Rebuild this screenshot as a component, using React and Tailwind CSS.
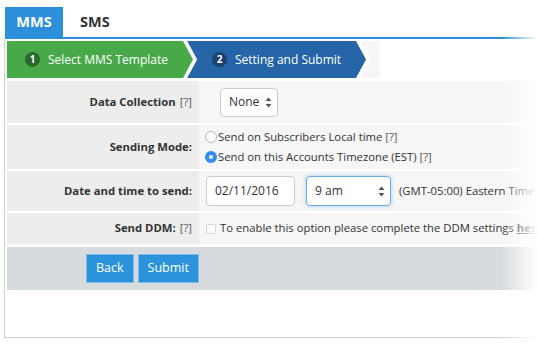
import React from 'react'

export default function App() {
  return (
    <div className="relative w-[537px] h-[344px] overflow-hidden bg-white font-['Open_Sans',sans-serif] text-[#333]">
      {/* tabs */}
      <div className="pt-[7px] pl-[5px]">
        <div className="flex items-end border-b-2 border-[#2b8fd9]">
          <div className="w-[58px] h-[30px] bg-[#2b8fd9] text-white font-bold text-[14.5px] flex items-center justify-center">MMS</div>
          <div className="ml-[17px] h-[30px] flex items-center font-bold text-[14.5px] text-[#333]">SMS</div>
        </div>
      </div>

      {/* panel */}
      <div className="ml-[4px] h-[299px] border-l border-b border-[#cfcfcf] pl-[2px] pt-[2px]">
        {/* wizard steps */}
        <div className="flex h-[37px] w-[373px] bg-[#f6f6f6]">
          <div className="w-[190px] shrink-0 h-full bg-white [clip-path:polygon(0_0,180px_0,190px_50%,180px_100%,0_100%)]">
            <div className="w-[186px] h-full bg-[#48a948] [clip-path:polygon(0_0,176px_0,186px_50%,176px_100%,0_100%)] flex items-center pl-[18px] text-white">
              <span className="w-[15px] h-[15px] rounded-full bg-[#2c6a2c] text-[10px] font-bold flex items-center justify-center">1</span>
              <span className="ml-[8px] text-[12px]">Select MMS Template</span>
            </div>
          </div>
          <div className="ml-[-10px] w-[183px] shrink-0 h-full bg-white [clip-path:polygon(0_0,173px_0,183px_50%,173px_100%,0_100%,10px_50%)]">
            <div className="w-[179px] h-full bg-[#2565a7] [clip-path:polygon(0_0,169px_0,179px_50%,169px_100%,0_100%,10px_50%)] flex items-center pl-[25px] text-white">
              <span className="w-[15px] h-[15px] rounded-full bg-[#1b426f] text-[10px] font-bold flex items-center justify-center">2</span>
              <span className="ml-[8px] text-[12px]">Setting and Submit</span>
            </div>
          </div>
        </div>

        {/* form rows */}
        <div className="mt-[3px] flex flex-col gap-[2px] text-[11.3px]">
          <div className="flex h-[42px]">
            <div className="w-[192px] shrink-0 bg-[#ededed] flex items-center justify-end pr-[7px]">
              <span className="font-bold">Data Collection</span>
              <span className="ml-[4px] text-[#555]">[?]</span>
            </div>
            <div className="flex-1 bg-[#f6f6f6] flex items-center pl-[21px]">
              <div className="w-[58px] h-[29px] bg-white border border-[#ccc] rounded-[4px] flex items-center justify-between pl-[8px] pr-[5px] text-[12px]">
                <span>None</span>
                <Arrows />
              </div>
            </div>
          </div>

          <div className="flex h-[44px]">
            <div className="w-[192px] shrink-0 bg-[#ededed] flex items-center justify-end pr-[7px]">
              <span className="font-bold">Sending Mode:</span>
            </div>
            <div className="flex-1 bg-[#f6f6f6] flex flex-col justify-center pl-[6px] gap-[3px] whitespace-nowrap">
              <div className="flex items-center">
                <span className="w-[12px] h-[12px] rounded-full border border-[#b5b5b5] bg-white"></span>
                <span className="ml-[1px]">Send on Subscribers Local time <span className="text-[#555]">[?]</span></span>
              </div>
              <div className="flex items-center">
                <span className="w-[12px] h-[12px] rounded-full bg-[#2f8ef0] flex items-center justify-center">
                  <span className="w-[4px] h-[4px] rounded-full bg-white"></span>
                </span>
                <span className="ml-[1px]">Send on this Accounts Timezone (EST) <span className="text-[#555]">[?]</span></span>
              </div>
            </div>
          </div>

          <div className="flex h-[40px]">
            <div className="w-[192px] shrink-0 bg-[#ededed] flex items-center justify-end pr-[7px]">
              <span className="font-bold whitespace-nowrap">Date and time to send:</span>
            </div>
            <div className="flex-1 bg-[#f6f6f6] flex items-center pl-[7px] whitespace-nowrap">
              <div className="w-[89px] h-[30px] shrink-0 bg-white border border-[#ccc] rounded-[4px] flex items-center pl-[8px] text-[12px]">02/11/2016</div>
              <div className="ml-[11px] w-[85px] h-[30px] shrink-0 bg-white border border-[#66afe9] rounded-[4px] shadow-[0_0_4px_rgba(102,175,233,0.6)] flex items-center justify-between pl-[8px] pr-[5px] text-[12px]">
                <span>9 am</span>
                <Arrows />
              </div>
              <span className="ml-[8px]">(GMT-05:00) Eastern Time (US &amp; Canada)</span>
            </div>
          </div>

          <div className="flex h-[31px]">
            <div className="w-[192px] shrink-0 bg-[#ededed] flex items-center justify-end pr-[7px]">
              <span className="font-bold">Send DDM:</span>
              <span className="ml-[4px] text-[#555]">[?]</span>
            </div>
            <div className="flex-1 bg-[#f6f6f6] flex items-center pl-[7px] whitespace-nowrap">
              <span className="w-[10px] h-[10px] shrink-0 rounded-[2px] border border-[#d6d6d6] bg-white"></span>
              <span className="ml-[4px]">To enable this option please complete the DDM settings <span className="font-bold underline">here</span></span>
            </div>
          </div>
        </div>

        {/* footer */}
        <div className="mt-[3px] h-[43px] bg-[#d8dbde] flex items-center pl-[79px] gap-[4px]">
          <button className="h-[29px] px-[9px] bg-[#2b93dc] border border-[#7cbdeb] text-white text-[12.5px]">Back</button>
          <button className="h-[29px] px-[9px] bg-[#2b93dc] border border-[#7cbdeb] text-white text-[12.5px]">Submit</button>
        </div>
      </div>

      {/* right edge fade */}
      <div className="absolute top-0 right-0 bottom-0 w-[36px] bg-gradient-to-r from-white/0 to-white"></div>
    </div>
  )
}

function Arrows() {
  return (
    <svg width="7" height="11" viewBox="0 0 7 11">
      <path d="M3.5 0.5 L6.5 4 L0.5 4 Z" fill="#555" />
      <path d="M3.5 10.5 L6.5 7 L0.5 7 Z" fill="#555" />
    </svg>
  )
}
